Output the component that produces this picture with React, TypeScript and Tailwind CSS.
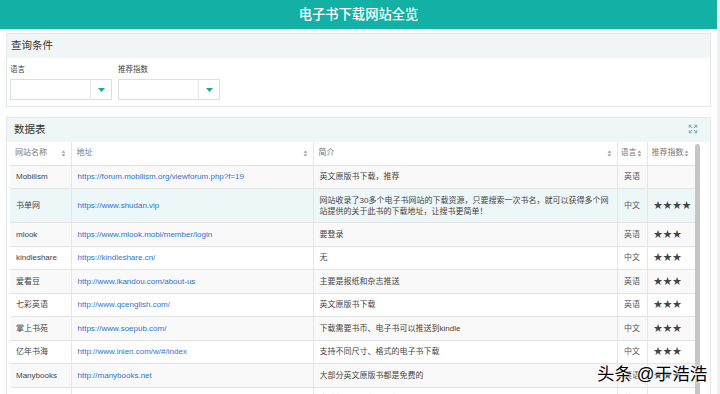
import React from "react";
import { Expand } from "lucide-react";

type Row = { name: string; url: string; desc: React.ReactNode; lang: string; stars: string; tall?: boolean };

const rows: Row[] = [
  { name: "Mobilism", url: "https://forum.mobilism.org/viewforum.php?f=19", desc: "英文原版书下载，推荐", lang: "英语", stars: "" },
  {
    name: "书单网",
    url: "https://www.shudan.vip",
    desc: (
      <>
        网站收录了30多个电子书网站的下载资源，只要搜索一次书名，就可以获得多个网
        <br />
        站提供的关于此书的下载地址，让搜书更简单！
      </>
    ),
    lang: "中文",
    stars: "★★★★",
    tall: true,
  },
  { name: "mlook", url: "https://www.mlook.mobi/member/login", desc: "要登录", lang: "英语", stars: "★★★" },
  { name: "kindleshare", url: "https://kindleshare.cn/", desc: "无", lang: "中文", stars: "★★★" },
  { name: "爱看豆", url: "http://www.ikandou.com/about-us", desc: "主要是报纸和杂志推送", lang: "英语", stars: "★★★" },
  { name: "七彩英语", url: "http://www.qcenglish.com/", desc: "英文原版书下载", lang: "英语", stars: "★★★" },
  { name: "掌上书苑", url: "https://www.soepub.com/", desc: "下载需要书币、电子书可以推送到kindle", lang: "中文", stars: "★★★" },
  { name: "亿年书海", url: "http://www.inien.com/w/#/index", desc: "支持不同尺寸、格式的电子书下载", lang: "中文", stars: "★★★" },
  { name: "Manybooks", url: "http://manybooks.net", desc: "大部分英文原版书都是免费的", lang: "英语", stars: "★★★" },
  { name: "Gutenberg", url: "http://www.gutenberg.org", desc: "古登堡计划，免费公版书", lang: "英语", stars: "★★★" },
];

const SortIcon = () => (
  <svg width="5" height="7" viewBox="0 0 5 7" className="shrink-0">
    <path d="M2.5 0.5 L4.5 2.8 H0.5 Z" fill="#9a9a9a" />
    <path d="M2.5 6.5 L4.5 4.2 H0.5 Z" fill="#9a9a9a" />
  </svg>
);

const Select = () => (
  <div className="flex h-[21px] w-[102px] border border-[#dcdfe0] bg-white">
    <div className="flex-1" />
    <div className="flex w-[21px] items-center justify-center border-l border-[#e3e5e6]">
      <svg width="7" height="4" viewBox="0 0 7 4">
        <path d="M0 0 H7 L3.5 4 Z" fill="#1aa89c" />
      </svg>
    </div>
  </div>
);

export default function App() {
  return (
    <div
      className="flex h-[394px] w-[720px] overflow-hidden bg-white text-[#333]"
      style={{ fontFamily: '"Liberation Sans", "Noto Sans CJK SC", sans-serif' }}
    >
      <div className="relative w-[717px] shrink-0">
        <div className="flex h-[29px] items-center justify-center bg-[#13b1a5] text-[13.3px] font-medium text-white">
          电子书下载网站全览
        </div>

        <div className="mx-[6px] mt-[4px] border border-[#e4e8e8] bg-white">
          <div className="flex h-[24px] items-center bg-[#f2f5f5] px-[4px] text-[10.5px] text-[#333]">查询条件</div>
          <div className="flex gap-[6px] px-[3px] pb-[6px] pt-[7px]">
            <div className="flex flex-col gap-[4px]">
              <span className="text-[7.5px] leading-[10px] text-[#444]">语言</span>
              <Select />
            </div>
            <div className="flex flex-col gap-[4px]">
              <span className="text-[7.5px] leading-[10px] text-[#444]">推荐指数</span>
              <Select />
            </div>
          </div>
        </div>

        <div className="mx-[6px] mt-[10px] border border-[#e4e8e8] bg-white">
          <div className="flex h-[24px] items-center justify-between bg-[#eff6f6] pl-[7px] pr-[12px]">
            <span className="text-[10.5px] text-[#333]">数据表</span>
            <Expand size={10} color="#5b9fc0" strokeWidth={2} className="-mt-[3px]" />
          </div>
          <div className="flex items-stretch px-[3px]">
            <table className="w-[685px] table-fixed border-collapse self-start text-[8px]">
              <colgroup>
                <col className="w-[61px]" />
                <col className="w-[242px]" />
                <col className="w-[304px]" />
                <col className="w-[30px]" />
                <col className="w-[48px]" />
              </colgroup>
              <thead>
                <tr className="h-[23px] border-b border-[#e2e2e2] bg-white text-[#777]">
                  <th className="border-r border-[#e6e6e6] px-[5px] font-normal">
                    <div className="flex items-center justify-between">网站名称<SortIcon /></div>
                  </th>
                  <th className="border-r border-[#e6e6e6] px-[5px] font-normal">
                    <div className="flex items-center justify-between">地址<SortIcon /></div>
                  </th>
                  <th className="border-r border-[#e6e6e6] px-[5px] font-normal">
                    <div className="flex items-center justify-between">简介<SortIcon /></div>
                  </th>
                  <th className="border-r border-[#e6e6e6] px-[3px] font-normal">
                    <div className="flex items-center">语言<SortIcon /></div>
                  </th>
                  <th className="px-[4px] font-normal">
                    <div className="flex items-center">推荐指数<SortIcon /></div>
                  </th>
                </tr>
              </thead>
              <tbody>
                {rows.map((r, i) => (
                  <tr
                    key={i}
                    className={`${r.tall ? "h-[34px]" : "h-[23.5px]"} border-b border-[#e4e4e4] ${
                      i === 1 ? "bg-[#eef7f7]" : i % 2 === 0 ? "bg-[#f9f9f9]" : "bg-white"
                    }`}
                  >
                    <td className="border-r border-[#e6e6e6] px-[6px] leading-[11px] text-[#444]">{r.name}</td>
                    <td className="border-r border-[#e6e6e6] px-[6px] leading-[11px] text-[#2f74d0]">{r.url}</td>
                    <td className="whitespace-nowrap border-r border-[#e6e6e6] px-[6px] leading-[11px] text-[#444]">{r.desc}</td>
                    <td className="border-r border-[#e6e6e6] text-center leading-[11px] text-[#555]">{r.lang}</td>
                    <td className="px-[6px] text-[9px] leading-[11px] tracking-[0.5px] text-[#444]">{r.stars}</td>
                  </tr>
                ))}
              </tbody>
            </table>
            <div className="flex w-[6px] flex-col pt-[2px]">
              <div className="w-[5px] flex-1 rounded-t-[3px] bg-[#c6c6c6]" />
            </div>
          </div>
        </div>

        <div className="absolute left-[597px] top-[362px] text-[17.5px] leading-[24px] text-black [text-shadow:0_0_2px_#fff,0_0_2px_#fff,0_0_3px_#fff]">
          头条 @于浩浩
        </div>
      </div>
      <div className="flex-1 bg-[#f1f1f1]" />
    </div>
  );
}
